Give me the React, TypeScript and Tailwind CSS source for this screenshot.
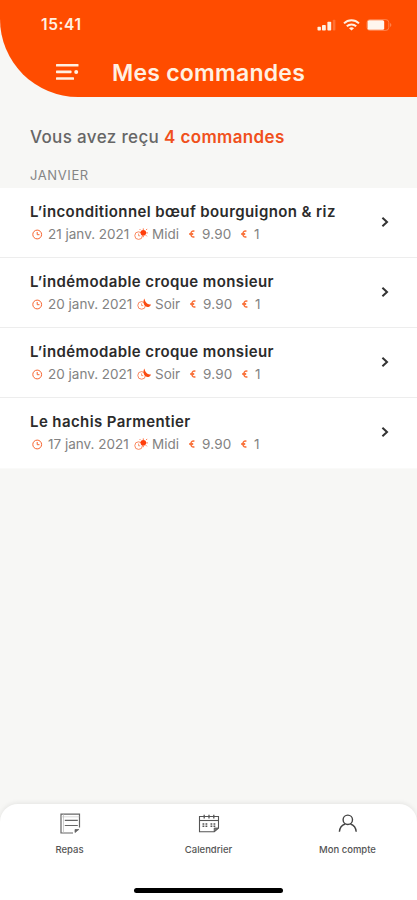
import React from 'react';

type Moment = 'Midi' | 'Soir';

interface Order {
  id: number;
  title: string;
  date: string;
  moment: Moment;
  price: string;
  quantity: number;
}

const orders: Order[] = [
  { id: 1, title: 'L’inconditionnel bœuf bourguignon & riz', date: '21 janv. 2021', moment: 'Midi', price: '9.90', quantity: 1 },
  { id: 2, title: 'L’indémodable croque monsieur', date: '20 janv. 2021', moment: 'Soir', price: '9.90', quantity: 1 },
  { id: 3, title: 'L’indémodable croque monsieur', date: '20 janv. 2021', moment: 'Soir', price: '9.90', quantity: 1 },
  { id: 4, title: 'Le hachis Parmentier', date: '17 janv. 2021', moment: 'Midi', price: '9.90', quantity: 1 },
];

const ClockIcon = () => (
  <svg className="w-[11px] h-[11px] shrink-0" viewBox="0 0 11 11" fill="none" stroke="#f8622c" strokeWidth="1">
    <circle cx="5.2" cy="5.5" r="4.4" />
    <path d="M5.2 3v2.7h2.3" />
  </svg>
);

const SunIcon = () => (
  <svg className="w-[14px] h-[12px] shrink-0" viewBox="0 0 14 12" fill="none">
    <circle cx="4.6" cy="7.6" r="3.8" stroke="#f97b4e" strokeWidth="0.9" />
    <path d="M4.6 5.6v2.2h1.6" stroke="#f97b4e" strokeWidth="0.8" />
    <circle cx="9.3" cy="4.8" r="2.8" fill="#ff3d0a" />
    <path d="M9.3 0.4v1.8M12 2.1l1.2-1.2M12.2 4.9h1.7M11.8 7.2l1.1 1.1M6.6 2.1l-1-1M9.3 7.4v1.8" stroke="#ff6a3a" strokeWidth="0.9" />
  </svg>
);

const MoonIcon = () => (
  <svg className="w-[14px] h-[12px] shrink-0" viewBox="0 0 14 12" fill="none">
    <circle cx="4.6" cy="7.4" r="3.8" stroke="#f97b4e" strokeWidth="0.9" />
    <path d="M4.6 5.4v2.2h1.6" stroke="#f97b4e" strokeWidth="0.8" />
    <path d="M7.4.6C5.8 3.2 6.4 7 8.8 8.6c2 .9 4.2.2 5.2-2.2C10.9 7.2 8.2 4.8 7.4.6z" fill="#fb4a10" />
  </svg>
);

const EuroIcon = () => (
  <svg className="w-[6px] h-[8px] shrink-0" viewBox="0 0 6 8" fill="none" stroke="#f9713a">
    <path d="M5.4 1.2C3.2.5 1.9 1.9 1.9 4s1.3 3.5 3.5 2.8" strokeWidth="1.5" />
    <path d="M.2 4h4" strokeWidth="1.9" />
  </svg>
);

const StatusBar = () => (
  <div className="h-12 pl-[41px] pr-[25px] flex items-center justify-between">
    <span className="mt-px text-[15.5px] leading-5 font-semibold tracking-[0.6px] text-[#fff0e2]">15:41</span>
    <div className="flex items-center mt-px">
      <svg className="w-[20px] h-[12px]" viewBox="0 0 20 12" fill="#fff0e2">
        <rect x="0.5" y="7.8" width="3.4" height="3.7" rx="0.8" />
        <rect x="5" y="6" width="3.8" height="5.5" rx="0.8" />
        <rect x="10.4" y="2.8" width="3.8" height="8.7" rx="0.8" />
        <rect x="15.8" y="0.8" width="2.6" height="10.7" rx="0.8" opacity="0.22" />
      </svg>
      <svg className="w-[17px] h-[12px] ml-[6px]" viewBox="0 0 17 12" fill="none" stroke="#fff0e2" strokeWidth="2">
        <path d="M1 4.4C5.2.3 11.8.3 16 4.4" />
        <path d="M3.8 7.3c2.7-2.5 6.7-2.5 9.4 0" />
        <path d="M8.5 11.6 6 9.2c1.4-1.2 3.6-1.2 5 0z" fill="#fff0e2" stroke="none" />
      </svg>
      <svg className="w-[26px] h-[12px] ml-[6px]" viewBox="0 0 26 12">
        <rect x="1" y="0.6" width="21.8" height="10.8" rx="3" fill="none" stroke="#ff9a6c" strokeWidth="0.7" />
        <rect x="1.6" y="1.2" width="16.6" height="9.6" rx="1.6" fill="#fff6ee" />
        <path d="M24.3 4v4c1.3-.8 1.3-3.2 0-4z" fill="#ff9a6c" />
      </svg>
    </div>
  </div>
);

const Header = () => (
  <header className="h-[97px] bg-[#ff4c00] rounded-bl-[78px]">
    <StatusBar />
    <div className="h-12 pl-14 flex items-center">
      <svg className="w-[23px] h-[18px]" viewBox="0 0 23 18" fill="#fff0e2">
        <rect x="0" y="1" width="22.5" height="2.6" rx="0.6" />
        <rect x="0" y="7.6" width="15.5" height="2.6" rx="0.6" />
        <circle cx="20.2" cy="8.9" r="2" />
        <rect x="0" y="14.2" width="18" height="2.6" rx="0.6" />
      </svg>
      <h1 className="ml-[33px] mt-px text-[23px] leading-7 font-semibold tracking-[0.24px] text-[#fff0e2] whitespace-nowrap">Mes commandes</h1>
    </div>
  </header>
);

const OrderRow = ({ order }: { order: Order }) => {
  const isNoon = order.moment === 'Midi';

  return (
    <li className="h-[70px] pl-[30px] pr-7 flex items-center justify-between bg-white border-b border-[#ededed] last:h-[71px] last:pb-px last:border-[#fafaf9]">
      <div className="pt-[1px]">
        <h2 className="text-[15px] leading-[22px] font-semibold tracking-[0.4px] text-[#2b2b2b] whitespace-nowrap">{order.title}</h2>
        <div className="flex items-center h-[22px] pl-[2px] text-[13.5px] leading-[22px] text-[#828282] whitespace-nowrap">
          <ClockIcon />
          <span className={isNoon ? 'ml-[5px] w-[86px]' : 'ml-[5px] w-[89px]'}>{order.date}</span>
          {isNoon ? <SunIcon /> : <MoonIcon />}
          <span className={isNoon ? 'ml-1 w-[37px]' : 'ml-1 w-[35px]'}>{order.moment}</span>
          <EuroIcon />
          <span className="ml-[7px] w-[39px] tracking-[0.2px]">{order.price}</span>
          <EuroIcon />
          <span className="ml-[7px]">{order.quantity}</span>
        </div>
      </div>
      <svg className="w-[8px] h-[12px] shrink-0 mb-px" viewBox="0 0 8 12" fill="none" stroke="#333" strokeWidth="2">
        <path d="M1.4 1.8 6 6l-4.6 4.2" />
      </svg>
    </li>
  );
};

const MealsIcon = () => (
  <svg className="w-[22px] h-[22px]" viewBox="0 0 22 22" fill="none" stroke="#666" strokeWidth="1.2">
    <path d="M14 20H2V1.2h18.5V14.5" />
    <path d="M4.5 1.2V20" stroke="#bbb" strokeWidth="0.7" />
    <path d="M5.8 7.3h13M5.8 12.5h13" />
    <path d="M2 3.8h18.5" stroke="#bbb" strokeWidth="0.6" />
    <path d="M16 19.5v-3h3.8z" fill="#666" strokeWidth="0.8" />
  </svg>
);

const CalendarIcon = () => (
  <svg className="w-[22px] h-[22px]" viewBox="0 0 22 22" fill="none" stroke="#555" strokeWidth="1.1">
    <path d="M16.2 18.8H1.5V3.5h19V15z" />
    <path d="M1.5 7.5h19" />
    <path d="M6.2 1.8v3.8M11 1.8v3.8M15.8 1.8v3.8" strokeWidth="1.3" />
    <path d="M4.5 11h5M12.5 11h5M4.5 13.2h5M12.5 13.2h5" strokeWidth="1.5" strokeDasharray="1.8 1.2" />
    <path d="M16.2 18.8v-3.8h4.3z" fill="#777" strokeWidth="0.8" />
  </svg>
);

const AccountIcon = () => (
  <svg className="w-[22px] h-[22px]" viewBox="0 0 22 22" fill="none" stroke="#444" strokeWidth="1.4">
    <circle cx="10.8" cy="6.8" r="4.7" />
    <path d="M2.4 18.8c.3-4 2.5-6.8 5.8-7.8M13.4 11c3.3 1 5.5 3.8 5.8 7.8" />
  </svg>
);

const tabs = [
  { label: 'Repas', icon: <MealsIcon /> },
  { label: 'Calendrier', icon: <CalendarIcon /> },
  { label: 'Mon compte', icon: <AccountIcon /> },
];

const TabBar = () => (
  <nav className="h-[96px] bg-white rounded-t-[18px] shadow-[0_-1px_5px_rgba(0,0,0,0.08)] flex flex-col items-center justify-between">
    <div className="w-full grid grid-cols-3 pt-[9px]">
      {tabs.map((tab) => (
        <a key={tab.label} className="flex flex-col items-center">
          {tab.icon}
          <span className="mt-[9px] text-[9.5px] leading-3 font-medium text-[#555]">{tab.label}</span>
        </a>
      ))}
    </div>
    <div className="w-[149px] h-[5px] mb-[7px] rounded-full bg-black" />
  </nav>
);

export default function App() {
  return (
    <div className="w-full h-[900px] flex flex-col overflow-hidden bg-[#f7f7f5] font-[Inter,sans-serif]">
      <Header />
      <main className="flex-1">
        <p className="mt-7 ml-[30px] text-[17px] leading-6 font-medium tracking-[0.36px] text-[#666]">
          Vous avez reçu <span className="font-semibold text-[#f0501c]">4 commandes</span>
        </p>
        <p className="mt-4 ml-[30px] text-[13px] leading-5 tracking-[0.6px] text-[#858585]">JANVIER</p>
        <ul className="mt-[3px]">
          {orders.map((order) => (
            <OrderRow key={order.id} order={order} />
          ))}
        </ul>
      </main>
      <TabBar />
    </div>
  );
}
